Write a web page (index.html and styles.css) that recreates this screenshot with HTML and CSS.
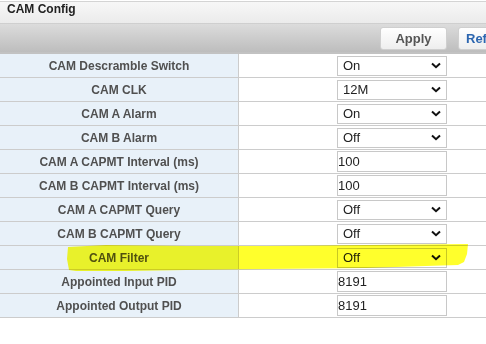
FILE: index.html
```html
<!doctype html>
<html lang="en">
<head>
  <meta charset="utf-8">
  <title>CAM Config</title>
  <link rel="stylesheet" href="styles.css">
</head>
<body>

<div class="page">
  <div class="title-bar">CAM Config</div>

  <div class="tool-bar">
    <button class="btn">Apply</button>
    <button class="btn btn-blue">Refresh</button>
  </div>

  <table class="cfg">
    <tr>
      <td class="lbl">CAM Descramble Switch</td>
      <td class="val"><select><option>On</option><option>Off</option></select></td>
    </tr>
    <tr>
      <td class="lbl">CAM CLK</td>
      <td class="val"><select><option>12M</option></select></td>
    </tr>
    <tr>
      <td class="lbl">CAM A Alarm</td>
      <td class="val"><select><option>On</option><option>Off</option></select></td>
    </tr>
    <tr>
      <td class="lbl">CAM B Alarm</td>
      <td class="val"><select><option>Off</option><option>On</option></select></td>
    </tr>
    <tr>
      <td class="lbl">CAM A CAPMT Interval (ms)</td>
      <td class="val"><input type="text" value="100"></td>
    </tr>
    <tr>
      <td class="lbl">CAM B CAPMT Interval (ms)</td>
      <td class="val"><input type="text" value="100"></td>
    </tr>
    <tr>
      <td class="lbl">CAM A CAPMT Query</td>
      <td class="val"><select><option>Off</option><option>On</option></select></td>
    </tr>
    <tr>
      <td class="lbl">CAM B CAPMT Query</td>
      <td class="val"><select><option>Off</option><option>On</option></select></td>
    </tr>
    <tr>
      <td class="lbl">CAM Filter</td>
      <td class="val"><select><option>Off</option><option>On</option></select></td>
    </tr>
    <tr>
      <td class="lbl">Appointed Input PID</td>
      <td class="val"><input type="text" value="8191"></td>
    </tr>
    <tr>
      <td class="lbl">Appointed Output PID</td>
      <td class="val"><input type="text" value="8191"></td>
    </tr>
  </table>

  <!-- highlighter stroke drawn over the CAM Filter row -->
  <svg class="marker" width="410" height="30" viewBox="0 0 410 30">
    <polygon points="2,3 40,1 120,2 200,2 300,1 402,0 401,10 398,18 392,21 360,22 300,24 200,25 120,26 60,27 10,27 3,26 1,15" />
  </svg>
</div>

</body>
</html>
```

FILE: styles.css
```css
body { margin: 0; background: #fff; font-family: "Liberation Sans", Arial, sans-serif; overflow: hidden; }

.page { position: relative; width: 486px; }

.title-bar {
  margin-top: 1px;
  height: 21px;
  line-height: 21px;
  padding-left: 7px;
  border-top: 1px solid #d4d4d4;
  border-bottom: 1px solid #cfcfcf;
  background: linear-gradient(#f7f7f7, #ebebeb);
  font: bold 12px "Liberation Sans", Arial, sans-serif;
  color: #222;
}

.tool-bar {
  height: 28px;
  display: flex;
  align-items: center;
  gap: 11px;
  padding-left: 380px;
  white-space: nowrap;
  background: linear-gradient(#dcdcdc, #bdbdbd);
  border-bottom: 2px solid #c2c2c2;
}

.btn {
  flex: none;
  height: 23px;
  width: 67px;
  padding: 0;
  border: 1px solid #cfcfcf;
  border-radius: 3px;
  background: linear-gradient(#ffffff, #eeeeee);
  font: bold 13px "Liberation Sans", Arial, sans-serif;
  color: #555;
}
.btn-blue { color: #2c66b0; text-align: left; padding-left: 7px; width: 80px; }

.cfg { border-collapse: collapse; width: 640px; }
.cfg td { height: 23px; padding: 0; border-bottom: 1px solid #cccccc; }
.lbl {
  width: 238px;
  background: #e8f1f9;
  border-right: 1px solid #cccccc;
  text-align: center;
  font: bold 12px "Liberation Sans", Arial, sans-serif;
  color: #505050;
}
.val { padding-left: 98px !important; }

.val select, .val input {
  box-sizing: border-box;
  width: 110px;
  font: 13px "Liberation Sans", Arial, sans-serif;
  color: #222;
  background: #fff;
  border: 1px solid #c8c8c8;
  border-radius: 0;
  vertical-align: middle;
  display: block;
}
.val select {
  height: 20px;
  padding: 0 0 0 5px;
  appearance: none;
  background-image: url("data:image/svg+xml,%3Csvg xmlns='http://www.w3.org/2000/svg' width='10' height='7' viewBox='0 0 10 7'%3E%3Cpath d='M1 1.5 L5 5.2 L9 1.5' fill='none' stroke='%23111' stroke-width='2'/%3E%3C/svg%3E");
  background-repeat: no-repeat;
  background-position: right 5px center;
}
.val input { height: 21px; padding: 0; }

.marker {
  position: absolute;
  left: 66px;
  top: 243px;
  mix-blend-mode: multiply;
}
.marker polygon { fill: #ffff2c; }
```
